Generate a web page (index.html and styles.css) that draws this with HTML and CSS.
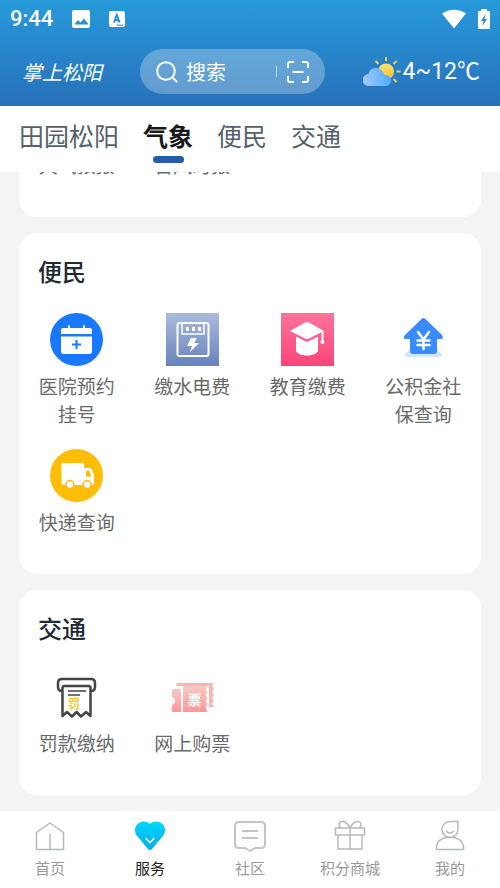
FILE: index.html
```html
<!DOCTYPE html>
<html lang="zh-CN">
<head>
<meta charset="utf-8">
<meta name="viewport" content="width=device-width, initial-scale=1">
<title>掌上松阳</title>
<link rel="stylesheet" href="styles.css">
</head>
<body>
<header class="header">
  <div class="status">
    <span class="clock">9:44</span>
    <svg class="status-photo" width="18" height="18" viewBox="0 0 18 18"><rect width="18" height="18" rx="2" fill="#fff"/><path d="M3 14.500v-1l3-3.500 2.500 2.500L12 8.500l4 5v1z" fill="#2b8fd0"/></svg>
    <svg class="status-lang" width="16" height="18" viewBox="0 0 16 18"><rect y="1" width="16" height="16" rx="2" fill="#fff"/><path d="M5 12.500 7.800 5l2.800 7.500M6 10.300h3.600" fill="none" stroke="#2b8fd0" stroke-width="2"/><path d="M8 15.300h6" stroke="#2b8fd0" stroke-width="1.500" stroke-dasharray="1.500 .7"/></svg>
    <svg class="status-wifi" width="26" height="20" viewBox="0 0 26 20"><path d="M1 4.500C7.500-.6 18.500-.6 25 4.500L13 19.500z" fill="#fff"/></svg>
    <svg class="status-battery" width="12" height="20" viewBox="0 0 12 20"><path d="M3 0h6v2h2q1 0 1 1v16q0 1-1 1H1q-1 0-1-1V3q0-1 1-1h2z" fill="#fff"/><path d="M7.500 5 3 12h2.500L4.500 17 9 10H6.500z" fill="#2b8fd0"/></svg>
  </div>
  <div class="topbar">
    <h1 class="brand">掌上松阳</h1>
    <div class="search">
      <svg width="22" height="22" viewBox="0 0 22 22" fill="none" stroke="#fff" stroke-width="2"><circle cx="10" cy="10" r="8.800"/><path d="m16 16 5 5"/></svg>
      <input type="search" aria-label="搜索" placeholder="搜索">
      <span class="divider"></span>
      <button type="button" class="scan" aria-label="扫一扫"><svg width="22" height="22" viewBox="0 0 22 22" fill="none" stroke="#fff" stroke-width="2"><path d="M1 7V3q0-2 2-2h4M15 1h4q2 0 2 2v4M21 15v4q0 2-2 2h-4M7 21H3q-2 0-2-2v-4M5.500 11h11"/></svg></button>
    </div>
    <div class="weather">
      <svg width="40" height="32" viewBox="0 0 40 32">
        <defs><linearGradient id="cloud"><stop stop-color="#a5c9ff"/><stop offset="1" stop-color="#4dacff"/></linearGradient><linearGradient id="sun" x2="0" y2="1"><stop stop-color="#ffe36c"/><stop offset="1" stop-color="#f8bd32"/></linearGradient></defs>
        <circle cx="23" cy="15.500" r="8" fill="url(#sun)"/>
        <path d="M23 1v4M12.500 5l3 3M33.500 5l-3 3M33.500 15.500h4M30.500 23l3 3" stroke="#f9cd4c" stroke-width="2"/>
        <path d="M6 30a6 6 0 0 1-.5-12 7.500 7.500 0 0 1 12.500-4q3 2 3.500 5c8-1 9 10 2 11z" fill="url(#cloud)"/>
      </svg>
      <span>4~12℃</span>
    </div>
  </div>
</header>
<nav class="tabs" aria-label="服务分类">
  <a href="#tianyuan">田园松阳</a>
  <a href="#qixiang" class="current">气象</a>
  <a href="#bianmin">便民</a>
  <a href="#jiaotong">交通</a>
</nav>
<main class="content">
  <section class="card scrolled" id="qixiang">
    <div class="grid">
      <a class="service" href="#"><span>天气预报</span></a>
      <a class="service" href="#"><span>台风时报</span></a>
    </div>
  </section>
  <section class="card" id="bianmin">
    <h2>便民</h2>
    <div class="grid">
      <a class="service" href="#">
        <svg viewBox="0 0 53 53"><circle cx="26.500" cy="26.500" r="26.500" fill="#1878ff"/><path d="M11 21v-4q0-2 2-2h5v-2q0-1 1-1t1 1v2h13v-2q0-1 1-1t1 1v2h5q2 0 2 2v4z" fill="#fff"/><path d="M11 23.500h31V38q0 3-3 3H14q-3 0-3-3z" fill="#fff"/><path d="M26.500 27v9M22 31.500h9" stroke="#1878ff" stroke-width="2"/></svg>
        <span>医院预约挂号</span>
      </a>
      <a class="service" href="#">
        <svg viewBox="0 0 53 53"><defs><linearGradient id="meter" x2="0" y2="1"><stop stop-color="#a9bbdc"/><stop offset="1" stop-color="#6883bc"/></linearGradient></defs><path fill="url(#meter)" d="M0 0h53v53H0z"/><g fill="none" stroke="#fff" stroke-width="2"><rect x="11.500" y="10" width="31" height="33" rx="2"/><path d="M16 11v10h22V11" stroke-width="1.500"/><path d="M20 16h15" stroke-width="4" stroke-dasharray="3"/></g><path d="M25 25h6l-3 5h5l-9 9 2-6h-5z" fill="#fff"/></svg>
        <span>缴水电费</span>
      </a>
      <a class="service" href="#">
        <svg viewBox="0 0 53 53"><defs><linearGradient id="edu" x2="0" y2="1"><stop stop-color="#ff739b"/><stop offset="1" stop-color="#f9457a"/></linearGradient></defs><path fill="url(#edu)" d="M0 0h53v53H0z"/><path d="M9 18 24 9.500q2-1 4 0L43 18 28 25.500q-2 1-4 0z" fill="#fff"/><path d="M15 23.500 24 28q2 1 4 0l9-4.500V38c-3 6-19 6-22 0z" fill="#fff"/><path d="M41.500 18v10" stroke="#fff" stroke-width="2"/><circle cx="41.500" cy="29" r="2" fill="#fff"/></svg>
        <span>教育缴费</span>
      </a>
      <a class="service" href="#">
        <svg viewBox="0 0 53 53"><path d="M12 37h29l4 4q0 3-3 3H11q-4 0-3-3z" fill="#d4e6ff"/><path d="M24.500 6q2-2 4 0L45 22q2 4-1 4h-4v12q0 3-3 3H16q-3 0-3-3V26H9q-4 0-1-4z" fill="#388bff"/><path d="m21 19 5.500 7.500L32 19M26.500 26v10M20.500 27.500h12M20.500 32h12" fill="none" stroke="#fff" stroke-width="2.500" stroke-linecap="round"/></svg>
        <span>公积金社保查询</span>
      </a>
      <a class="service" href="#">
        <svg viewBox="0 0 53 53"><circle cx="26.500" cy="26.500" r="26.500" fill="#ffbe05"/><path d="M12.500 14H32q2 0 2 2v3h5q2 0 3 2l2 5v8q0 2-2 2H13.500q-2 0-2-2V15q0-1 1-1z" fill="#fff"/><path d="M36 21.500h3l2.500 6H36z" fill="#ffbe05"/><g fill="#fff" stroke="#ffbe05" stroke-width="1.500"><circle cx="20" cy="35.500" r="4"/><circle cx="37" cy="35.500" r="4"/></g></svg>
        <span>快递查询</span>
      </a>
    </div>
  </section>
  <section class="card" id="jiaotong">
    <h2>交通</h2>
    <div class="grid">
      <a class="service" href="#">
        <svg viewBox="0 0 53 53"><g fill="none" stroke="#444" stroke-width="2.500" stroke-linejoin="round"><path d="M12 21q-4 0-4-4v-4q0-4 4-4h29q4 0 4 4v4q0 4-4 4"/><path d="M12.500 46V18q0-2 2-2h24q2 0 2 2v28l-4.500-4-5 4.500-4.500-4.500-4.500 4.500-5-4.500z"/><path d="M18 21h18M18 25h12" stroke-width="1.500"/></g><text x="24" y="39" class="stamp fine">罚</text></svg>
        <span>罚款缴纳</span>
      </a>
      <a class="service" href="#">
        <svg viewBox="0 0 53 53"><defs><linearGradient id="ticket" x2="0" y2="1"><stop stop-color="#fbc8c5"/><stop offset="1" stop-color="#ff9699"/></linearGradient></defs><path d="M11 13h37l-2 3 2 3-2 3 2 3-2 3 2 3-2 3 2 3h-5V16H10z" fill="#f8b5b2"/><path d="M7 19h8v23H7q-2 0-1-3v-4q3-1 3-4t-3-4v-5q0-3 1-3z" fill="url(#ticket)"/><path d="M17 16h25l-2 3 2 3-2 3 2 3-2 3 2 3-2 3 2 5H17z" fill="url(#ticket)"/><path d="m42 16-2 3 2 3-2 3 2 3-2 3 2 3-2 3 2 5" fill="none" stroke="#fff"/><text x="28.500" y="35" class="stamp ticket">票</text></svg>
        <span>网上购票</span>
      </a>
    </div>
  </section>
</main>
<nav class="bottom" aria-label="主导航">
  <a href="#"><svg viewBox="0 0 32 32"><path d="M2.500 12.500 16 3l13.500 9.500v17h-27zM16 14v15" fill="none" stroke="#b5b9c0" stroke-width="1.500" stroke-linejoin="round"/></svg><span>首页</span></a>
  <a href="#" class="current"><svg viewBox="0 0 32 32"><defs><linearGradient id="heart" x2="0" y2="1"><stop stop-color="#00d9fa"/><stop offset="1" stop-color="#00aaf0"/></linearGradient></defs><path d="M16 4C20 0 27 1 30 6c2 4 1 8-2 11L18 29q-2 2-4 0L4 17C1 14 0 10 2 6c3-5 10-6 14-2z" fill="url(#heart)"/><path d="m11.500 18 4.500 4.500 4.500-4.500" fill="none" stroke="#fff" stroke-width="1.500"/></svg><span>服务</span></a>
  <a href="#"><svg viewBox="0 0 32 32"><path d="M5 2h22q4 0 4 4v18q0 4-4 4h-6l-5 3-5-3H5q-4 0-4-4V6q0-4 4-4zM8 11h16M8 18h16" fill="none" stroke="#c4c4c4" stroke-width="2"/></svg><span>社区</span></a>
  <a href="#"><svg viewBox="0 0 32 32"><path d="M1.500 8h29v7h-29zM4 15v14h24V15M16 8v21M16 8C12 0 5 0 5 4.500q0 2 2 3.500M16 8c4-8 11-8 11-3.500q0 2-2 3.500" fill="none" stroke="#b5b9c0" stroke-width="1.500"/></svg><span>积分商城</span></a>
  <a href="#"><svg viewBox="0 0 32 32"><path d="M24 1.500H16a8 8 0 1 0 8 8zM2.500 29.500v-3C4 14 28 14 29.500 26.500v3zM12 11q4 4 8 0" fill="none" stroke="#b5b9c0" stroke-width="1.500"/></svg><span>我的</span></a>
</nav>
</body>
</html>
```
FILE: styles.css
```css
* {
  box-sizing: border-box;
}

body {
  margin: 0;
  min-height: 100vh;
  display: flex;
  flex-direction: column;
  background: #f4f4f4;
  font-family: Roboto, "Noto Sans CJK SC", sans-serif;
}

a {
  color: inherit;
  text-decoration: none;
}

svg {
  display: block;
  flex: none;
}

.header {
  background: linear-gradient(#279ada, #2770b9);
  color: #fff;
  padding-bottom: 12px;
}

.status {
  display: flex;
  align-items: center;
  height: 38px;
  padding: 0 10px;
}

.clock {
  font-size: 22px;
  font-weight: 500;
  line-height: 40px;
}

.status-photo,
.status-lang {
  margin-left: 19px;
}

.status-wifi {
  margin-left: auto;
}

.status-battery {
  margin-left: 11px;
}

.topbar {
  display: flex;
  gap: 38px;
  align-items: center;
  padding: 11px 20px 0 22px;
}

.brand {
  margin: 0;
  font-family: "Noto Sans CJK SC", sans-serif;
  font-size: 20px;
  font-style: italic;
  font-weight: 400;
  line-height: 32px;
  white-space: nowrap;
}

.search {
  flex: 1;
  min-width: 0;
  display: flex;
  align-items: center;
  height: 45px;
  padding: 0 16px;
  border-radius: 23px;
  background: rgba(255, 255, 255, 0.28);
}

.search input {
  flex: 1;
  min-width: 0;
  padding: 0 0 0 8px;
  border: 0;
  outline: 0;
  background: none;
  color: #fff;
  font: 20px/32px "Noto Sans CJK SC", sans-serif;
}

.search input::placeholder {
  color: #fff;
  opacity: 1;
}

.divider {
  width: 1px;
  height: 11px;
  margin-right: 10px;
  background: #b9d5ec;
}

.scan {
  padding: 0;
  border: 0;
  background: none;
}

.weather {
  display: flex;
  align-items: center;
  font-size: 23px;
  line-height: 32px;
  white-space: nowrap;
}

.tabs {
  display: flex;
  gap: 24px;
  height: 66px;
  padding: 14px 19px 0;
  background: #fff;
  color: #56616a;
  font-size: 25px;
  line-height: 36px;
}

.tabs .current {
  color: #181818;
  font-weight: 700;
}

.tabs .current::after {
  content: "";
  display: block;
  width: 31px;
  height: 7px;
  margin: 0 auto;
  border-radius: 4px;
  background: #255baa;
}

.content {
  flex: 1;
  display: flex;
  flex-direction: column;
  gap: 16px;
  padding: 0 19px 15px;
  overflow: hidden;
}

.card {
  padding: 24px 0 36px;
  border-radius: 18px;
  background: #fff;
}

.scrolled {
  margin-top: -43px;
}

.card h2 {
  margin: 0 19px 24px;
  color: #202b33;
  font-size: 24px;
  font-weight: 500;
  line-height: 32px;
}

.grid {
  display: grid;
  grid-template-columns: repeat(4, 1fr);
  row-gap: 19px;
}

.service {
  display: flex;
  flex-direction: column;
  align-items: center;
  gap: 8px;
  color: #6a6a6a;
  font-size: 19px;
  line-height: 28px;
  text-align: center;
}

.service svg {
  width: 53px;
  height: 53px;
}

.service span {
  width: 76px;
}

.stamp {
  font-family: "Noto Sans CJK SC", sans-serif;
  font-weight: 700;
  text-anchor: middle;
}

.fine {
  fill: #fcc719;
  font-size: 12px;
}

.ticket {
  fill: #fff;
  font-size: 14px;
}

.bottom {
  display: grid;
  grid-template-columns: repeat(5, 1fr);
  height: 77px;
  padding-top: 9px;
  background: #fff;
  color: #999;
  font-size: 15px;
  line-height: 24px;
}

.bottom a {
  display: flex;
  flex-direction: column;
  align-items: center;
  gap: 5px;
}

.bottom svg {
  width: 32px;
  height: 32px;
}

.bottom .current {
  color: #222;
}
```
